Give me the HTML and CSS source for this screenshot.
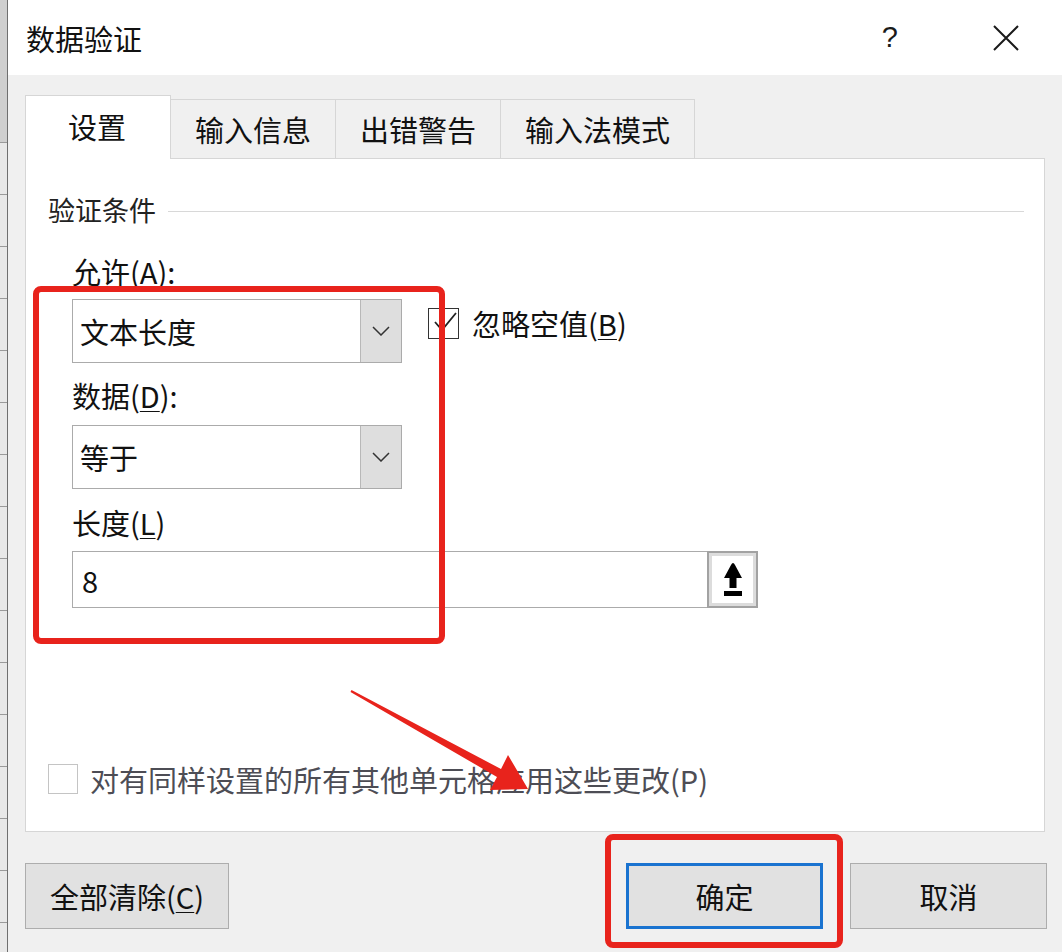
FILE: index.html
```html
<!DOCTYPE html>
<html lang="zh-CN">
<head>
  <meta charset="UTF-8">
  <title>数据验证</title>
  <link rel="stylesheet" href="styles.css">
</head>
<body>
  <div class="app">
    <div class="sheet-edge"></div>

    <div class="dialog">
      <div class="titlebar">
        <span class="title">数据验证</span>
        <span class="help">?</span>
        <svg class="close" width="26" height="26" viewBox="0 0 26 26">
          <path d="M1 1 L25 25 M25 1 L1 25" stroke="#1a1a1a" stroke-width="2" fill="none"/>
        </svg>
      </div>

      <div class="dialog-body">
        <div class="tabs">
          <div class="tab active">设置</div>
          <div class="tab">输入信息</div>
          <div class="tab">出错警告</div>
          <div class="tab">输入法模式</div>
        </div>

        <div class="panel">
          <div class="group-title">验证条件</div>

          <div class="field-label">允许(<u>A</u>):</div>
          <div class="row">
            <div class="combo">
              <div class="combo-value">文本长度</div>
              <div class="combo-btn">
                <svg width="18" height="10" viewBox="0 0 18 10"><path d="M1 1 L9 9 L17 1" stroke="#333" stroke-width="1.5" fill="none"/></svg>
              </div>
            </div>
            <label class="check">
              <span class="box">
                <svg width="28" height="28" viewBox="0 0 28 28"><path d="M5 13 L12 21 L26 4" stroke="#222" stroke-width="1.8" fill="none"/></svg>
              </span>
              <span>忽略空值(<u>B</u>)</span>
            </label>
          </div>

          <div class="field-label">数据(<u>D</u>):</div>
          <div class="combo">
            <div class="combo-value">等于</div>
            <div class="combo-btn">
              <svg width="18" height="10" viewBox="0 0 18 10"><path d="M1 1 L9 9 L17 1" stroke="#333" stroke-width="1.5" fill="none"/></svg>
            </div>
          </div>

          <div class="field-label">长度(<u>L</u>)</div>
          <div class="ref-input">
            <div class="ref-value">8</div>
            <div class="ref-btn">
              <svg width="18" height="33" viewBox="0 0 18 33">
                <path d="M9 0 Q10 0 11 2 L18 15 L12.5 15 L12.5 25 L5.5 25 L5.5 15 L0 15 L7 2 Q8 0 9 0 Z" fill="#000"/>
                <rect x="0" y="28" width="18" height="5" fill="#000"/>
              </svg>
            </div>
          </div>

          <label class="check disabled">
            <span class="box"></span>
            <span>对有同样设置的所有其他单元格应用这些更改(P)</span>
          </label>
        </div>

        <div class="footer">
          <button class="btn btn-clear">全部清除(<u>C</u>)</button>
          <div class="footer-right">
            <button class="btn default">确定</button>
            <button class="btn">取消</button>
          </div>
        </div>
      </div>
    </div>
  </div>

  <!-- annotations drawn over the screenshot -->
  <div class="mark mark-fields"></div>
  <div class="mark mark-ok"></div>
  <svg class="mark-arrow" width="200" height="120" viewBox="0 0 200 120">
    <polygon points="11.5,10.1 161,89 168,75 188,109 150,110 157,97 10.5,11.9" fill="#e8231c"/>
  </svg>
</body>
</html>
```

FILE: styles.css
```css
* { box-sizing: border-box; }

body {
  margin: 0;
  width: 1062px;
  height: 952px;
  overflow: hidden;
  position: relative;
  background: #f0f0f0;
  font-family: "Microsoft YaHei", "Noto Sans CJK SC", "Noto Sans", sans-serif;
  color: #111;
}
u { text-underline-offset: 3px; text-decoration-thickness: 1px; }

.app { display: flex; height: 952px; }

.sheet-edge {
  width: 8px;
  flex: none;
  border-right: 1px solid #6f6f6f;
  background:
    linear-gradient(#cfcfcf, #cfcfcf) 0 0 / 100% 142px no-repeat,
    repeating-linear-gradient(#e8e8e8 0 51px, #9a9a9a 51px 52px) 0 91px / 100% 100%;
}

.dialog { flex: 1; display: flex; flex-direction: column; }

.titlebar {
  height: 75px;
  background: #fff;
  display: flex;
  align-items: center;
  padding: 0 43px 0 18px;
}
.title { font-size: 29px; line-height: 36px; }
.help { margin-left: auto; font-size: 29px; color: #1a1a1a; margin-right: 95px; font-family: "Liberation Sans", sans-serif; }
.close { display: block; }

.dialog-body { flex: 1; padding: 20px 15px 0 17px; }

.tabs { display: flex; align-items: flex-end; height: 63px; }
.tab {
  height: 59px;
  padding: 0 24px;
  display: flex;
  align-items: center;
  font-size: 29px;
  background: #f0f0f0;
  border: 1px solid #d6d6d6;
  border-bottom: none;
  border-left: none;
}
.tab.active {
  height: 64px;
  margin-bottom: -1px;
  padding: 0 44px 4px 42px;
  background: #fff;
  border-left: 1px solid #d6d6d6;
  position: relative;
  z-index: 1;
}

.panel {
  width: 1020px;
  height: 674px;
  background: #fff;
  border: 1px solid #d6d6d6;
  padding: 33px 0 34px 46px;
  display: flex;
  flex-direction: column;
  align-items: flex-start;
}

.group-title {
  margin-left: -24px;
  align-self: stretch;
  display: flex;
  align-items: center;
  font-size: 27px;
  line-height: 36px;
  color: #222;
}
.group-title::after {
  content: "";
  flex: 1;
  height: 1px;
  background: #d8d8d8;
  margin: 3px 20px 0 12px;
}

.field-label { font-size: 29px; line-height: 36px; margin: 25px 0 10px; }
.row + .field-label { margin: 14px 0 12px; }
.combo + .field-label { margin: 15px 0 11px; }

.row { display: flex; align-items: flex-start; gap: 26px; }

.combo {
  width: 330px;
  height: 64px;
  display: flex;
  border: 1px solid #ababab;
  background: #fff;
}
.combo-value { flex: 1; display: flex; align-items: center; padding-left: 7px; font-size: 29px; }
.combo-btn {
  width: 41px;
  background: #dedede;
  border-left: 1px solid #b8b8b8;
  display: flex;
  align-items: center;
  justify-content: center;
}

.check { display: flex; align-items: center; gap: 13px; font-size: 29px; line-height: 36px; }
.row .check { margin-top: 6px; }
.box {
  width: 31px;
  height: 31px;
  border: 1.5px solid #333;
  background: #fff;
  display: flex;
  align-items: center;
  justify-content: center;
}
.check.disabled { margin-top: auto; margin-left: -24px; gap: 12px; color: #4d4d55; }
.check.disabled .box { border: 1px solid #c4c4c4; width: 30px; height: 30px; }

.ref-input { display: flex; height: 57px; }
.ref-value {
  width: 635px;
  border: 1px solid #ababab;
  border-right: none;
  display: flex;
  align-items: center;
  padding-left: 9px;
  font-size: 29px;
}
.ref-btn {
  width: 51px;
  border: 2px solid #a2a2a2;
  box-shadow: inset 0 0 0 3px #dcdcdc;
  background: #fff;
  display: flex;
  align-items: center;
  justify-content: center;
}

.footer { display: flex; justify-content: space-between; margin-top: 31px; }
.footer-right { display: flex; gap: 27px; }
.btn {
  height: 66px;
  width: 197px;
  background: #e1e1e1;
  border: 1px solid #adadad;
  font-family: inherit;
  font-size: 29px;
  color: #111;
  padding: 0;
}
.btn-clear { width: 204px; }
.btn.default { border: 3px solid #1a73d0; }

.mark {
  position: absolute;
  border: 6px solid #e8231c;
  border-radius: 8px;
}
.mark-fields { left: 33px; top: 286px; width: 412px; height: 358px; }
.mark-ok { left: 605px; top: 834px; width: 238px; height: 114px; }
.mark-arrow { position: absolute; left: 340px; top: 680px; }
```
